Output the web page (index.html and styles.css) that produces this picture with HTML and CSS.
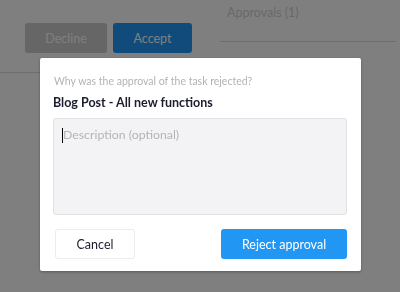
FILE: index.html
```html
<!DOCTYPE html>
<html lang="en">
<head>
  <meta charset="UTF-8" />
  <meta name="viewport" content="width=device-width, initial-scale=1.0" />
  <title>Reject approval</title>
  <link rel="stylesheet" href="styles.css">
</head>
<body>

<div class="page">
  <div class="task-panel">
    <div class="actions">
      <button type="button" class="btn btn-decline">Decline</button>
      <button type="button" class="btn btn-accept">Accept</button>
    </div>
  </div>
  <div class="side-panel">
    <div class="tab">Approvals (1)</div>
  </div>
</div>

<div class="backdrop"></div>

<div class="modal">
  <div class="question">Why was the approval of the task rejected?</div>
  <div class="task-title">Blog Post - All new functions</div>
  <div class="description">
    <span class="caret"></span><span class="placeholder">Description (optional)</span>
  </div>
  <div class="modal-footer">
    <button type="button" class="btn btn-cancel">Cancel</button>
    <button type="button" class="btn btn-reject">Reject approval</button>
  </div>
</div>

</body>
</html>
```

FILE: styles.css
```css
* { box-sizing: border-box; }
body {
  margin: 0;
  font-family: Lato, "Open Sans", sans-serif;
  background: #fff;
  color: #1c1d2e;
  width: 400px;
  height: 292px;
  overflow: hidden;
}
.page {
  display: flex;
  height: 292px;
}
.task-panel {
  width: 212px;
  height: 73px;
  border-bottom: 1px solid #dcdcdc;
  padding: 23px 0 0 25px;
}
.actions {
  display: flex;
  gap: 6px;
}
.btn {
  height: 30px;
  border: none;
  border-radius: 3px;
  font-family: inherit;
  font-size: 12.5px;
  cursor: pointer;
}
.btn-decline {
  width: 82px;
  background: #cccccc;
  color: #fff;
}
.btn-accept {
  width: 79px;
  background: #2097f6;
  color: #fff;
}
.side-panel {
  margin-left: 8px;
  width: 176px;
  height: 42px;
  border-bottom: 1px solid #dcdcdc;
}
.tab {
  padding: 5px 0 0 7px;
  font-size: 12.5px;
  color: #d2d2d2;
}
.backdrop {
  position: fixed;
  inset: 0;
  background: rgba(0, 0, 0, 0.5);
}
.modal {
  position: fixed;
  left: 40px;
  top: 58px;
  width: 321px;
  height: 213px;
  background: #fff;
  border-radius: 2px;
  box-shadow: 0 1px 3px rgba(0, 0, 0, 0.3);
  padding: 16px 14px 12px 13px;
}
.question {
  font-size: 10.5px;
  color: #b3b3b3;
  line-height: 14px;
  padding-left: 1px;
}
.task-title {
  margin-top: 7px;
  font-size: 12.5px;
  font-weight: bold;
  line-height: 16px;
  color: #1c1d2e;
}
.description {
  margin-top: 7px;
  height: 97px;
  background: #f3f3f5;
  border: 1px solid #e2e2e4;
  border-radius: 3px;
  padding: 8px 8px;
  display: flex;
  align-items: flex-start;
  font-size: 12.3px;
  line-height: 16px;
}
.caret {
  width: 1px;
  height: 15px;
  background: #000;
  margin-top: 1px;
}
.placeholder {
  color: #b4b4b8;
}
.modal-footer {
  margin-top: 14px;
  display: flex;
  justify-content: space-between;
  padding-left: 2px;
}
.btn-cancel {
  width: 80px;
  background: #fff;
  border: 1px solid #ececec;
  color: #1c1d2e;
}
.btn-reject {
  width: 126px;
  background: #2196f3;
  color: #fff;
}
```
